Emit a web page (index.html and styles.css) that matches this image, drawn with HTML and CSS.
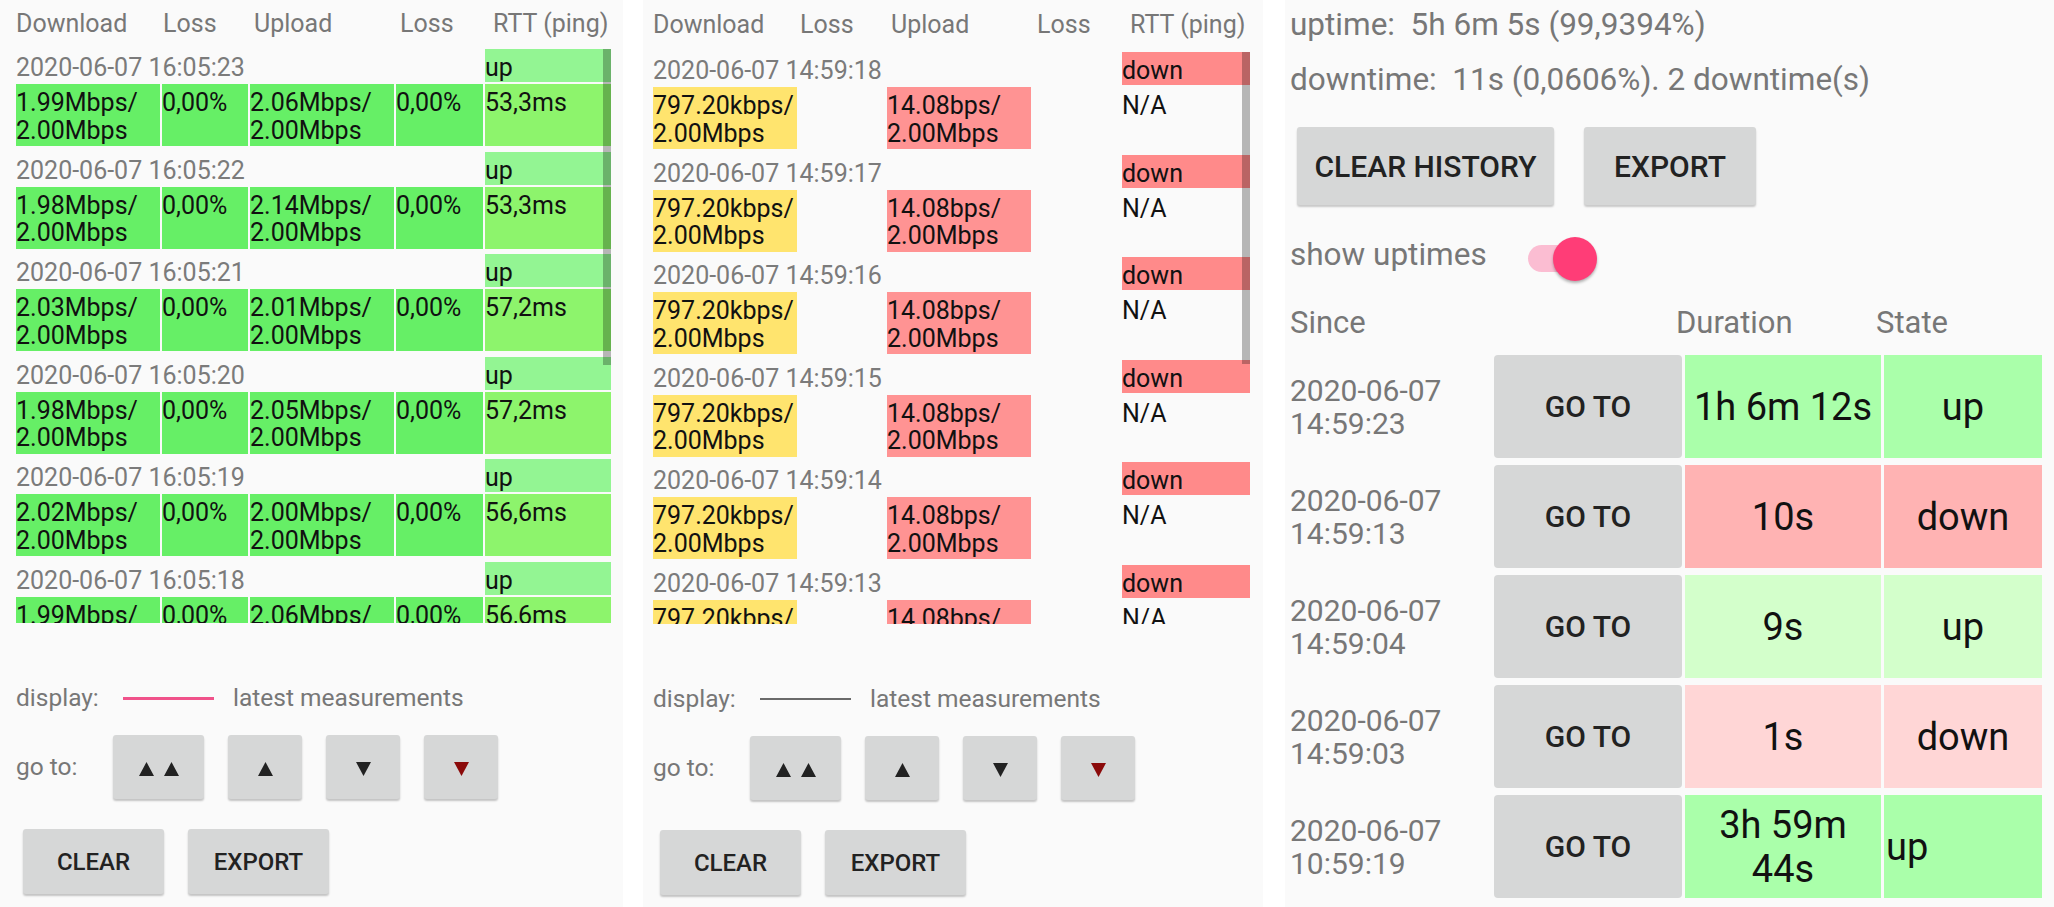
FILE: index.html
```html
<!DOCTYPE html>
<html lang="en">
<head>
<meta charset="utf-8">
<title>Network monitor</title>
<link rel="stylesheet" href="styles.css">
</head>
<body>
<div class="screen">

  <section class="panel p1">
    <div class="thead"><span>Download</span><span>Loss</span><span>Upload</span><span>Loss</span><span>RTT (ping)</span></div>
    <div class="list">
      <div class="rec">
        <div class="stamp">2020-06-07 16:05:23</div><div class="state up">up</div>
        <div class="cell ok">1.99Mbps/<br>2.00Mbps</div><div class="cell ok">0,00%</div><div class="cell ok">2.06Mbps/<br>2.00Mbps</div><div class="cell ok">0,00%</div><div class="cell rtt">53,3ms</div>
      </div>
      <div class="rec">
        <div class="stamp">2020-06-07 16:05:22</div><div class="state up">up</div>
        <div class="cell ok">1.98Mbps/<br>2.00Mbps</div><div class="cell ok">0,00%</div><div class="cell ok">2.14Mbps/<br>2.00Mbps</div><div class="cell ok">0,00%</div><div class="cell rtt">53,3ms</div>
      </div>
      <div class="rec">
        <div class="stamp">2020-06-07 16:05:21</div><div class="state up">up</div>
        <div class="cell ok">2.03Mbps/<br>2.00Mbps</div><div class="cell ok">0,00%</div><div class="cell ok">2.01Mbps/<br>2.00Mbps</div><div class="cell ok">0,00%</div><div class="cell rtt">57,2ms</div>
      </div>
      <div class="rec">
        <div class="stamp">2020-06-07 16:05:20</div><div class="state up">up</div>
        <div class="cell ok">1.98Mbps/<br>2.00Mbps</div><div class="cell ok">0,00%</div><div class="cell ok">2.05Mbps/<br>2.00Mbps</div><div class="cell ok">0,00%</div><div class="cell rtt">57,2ms</div>
      </div>
      <div class="rec">
        <div class="stamp">2020-06-07 16:05:19</div><div class="state up">up</div>
        <div class="cell ok">2.02Mbps/<br>2.00Mbps</div><div class="cell ok">0,00%</div><div class="cell ok">2.00Mbps/<br>2.00Mbps</div><div class="cell ok">0,00%</div><div class="cell rtt">56,6ms</div>
      </div>
      <div class="rec">
        <div class="stamp">2020-06-07 16:05:18</div><div class="state up">up</div>
        <div class="cell ok">1.99Mbps/<br>2.00Mbps</div><div class="cell ok">0,00%</div><div class="cell ok">2.06Mbps/<br>2.00Mbps</div><div class="cell ok">0,00%</div><div class="cell rtt">56,6ms</div>
      </div>
      <div class="thumb"></div>
    </div>
    <div class="disp"><span class="lbl">display:</span><span class="line pink"></span><span>latest measurements</span></div>
    <div class="goto"><span class="lbl2">go to:</span>
      <button class="nav wide"><svg width="40" height="14" viewBox="0 0 40 14"><path d="M0 14 L7.5 0 L15 14 Z M25 14 L32.5 0 L40 14 Z" fill="#222"/></svg></button>
      <button class="nav"><svg width="15" height="14" viewBox="0 0 15 14"><path d="M0 14 L7.5 0 L15 14 Z" fill="#222"/></svg></button>
      <button class="nav"><svg width="15" height="14" viewBox="0 0 15 14"><path d="M0 0 L15 0 L7.5 14 Z" fill="#222"/></svg></button>
      <button class="nav"><svg width="15" height="14" viewBox="0 0 15 14"><path d="M0 0 L15 0 L7.5 14 Z" fill="#8b0a0a"/></svg></button>
    </div>
    <div class="actions"><button class="btn">CLEAR</button><button class="btn">EXPORT</button></div>
  </section>

  <section class="panel p2">
    <div class="thead"><span>Download</span><span>Loss</span><span>Upload</span><span>Loss</span><span>RTT (ping)</span></div>
    <div class="list">
      <div class="rec">
        <div class="stamp">2020-06-07 14:59:18</div><div class="state down">down</div>
        <div class="cell warn">797.20kbps/<br>2.00Mbps</div><div class="cell"></div><div class="cell bad">14.08bps/<br>2.00Mbps</div><div class="cell"></div><div class="cell">N/A</div>
      </div>
      <div class="rec">
        <div class="stamp">2020-06-07 14:59:17</div><div class="state down">down</div>
        <div class="cell warn">797.20kbps/<br>2.00Mbps</div><div class="cell"></div><div class="cell bad">14.08bps/<br>2.00Mbps</div><div class="cell"></div><div class="cell">N/A</div>
      </div>
      <div class="rec">
        <div class="stamp">2020-06-07 14:59:16</div><div class="state down">down</div>
        <div class="cell warn">797.20kbps/<br>2.00Mbps</div><div class="cell"></div><div class="cell bad">14.08bps/<br>2.00Mbps</div><div class="cell"></div><div class="cell">N/A</div>
      </div>
      <div class="rec">
        <div class="stamp">2020-06-07 14:59:15</div><div class="state down">down</div>
        <div class="cell warn">797.20kbps/<br>2.00Mbps</div><div class="cell"></div><div class="cell bad">14.08bps/<br>2.00Mbps</div><div class="cell"></div><div class="cell">N/A</div>
      </div>
      <div class="rec">
        <div class="stamp">2020-06-07 14:59:14</div><div class="state down">down</div>
        <div class="cell warn">797.20kbps/<br>2.00Mbps</div><div class="cell"></div><div class="cell bad">14.08bps/<br>2.00Mbps</div><div class="cell"></div><div class="cell">N/A</div>
      </div>
      <div class="rec">
        <div class="stamp">2020-06-07 14:59:13</div><div class="state down">down</div>
        <div class="cell warn">797.20kbps/<br>2.00Mbps</div><div class="cell"></div><div class="cell bad">14.08bps/<br>2.00Mbps</div><div class="cell"></div><div class="cell">N/A</div>
      </div>
      <div class="thumb short"></div>
    </div>
    <div class="disp"><span class="lbl">display:</span><span class="line grey"></span><span>latest measurements</span></div>
    <div class="goto"><span class="lbl2">go to:</span>
      <button class="nav wide"><svg width="40" height="14" viewBox="0 0 40 14"><path d="M0 14 L7.5 0 L15 14 Z M25 14 L32.5 0 L40 14 Z" fill="#222"/></svg></button>
      <button class="nav"><svg width="15" height="14" viewBox="0 0 15 14"><path d="M0 14 L7.5 0 L15 14 Z" fill="#222"/></svg></button>
      <button class="nav"><svg width="15" height="14" viewBox="0 0 15 14"><path d="M0 0 L15 0 L7.5 14 Z" fill="#222"/></svg></button>
      <button class="nav"><svg width="15" height="14" viewBox="0 0 15 14"><path d="M0 0 L15 0 L7.5 14 Z" fill="#8b0a0a"/></svg></button>
    </div>
    <div class="actions"><button class="btn">CLEAR</button><button class="btn">EXPORT</button></div>
  </section>

  <section class="panel p3">
    <div class="stat">uptime:&nbsp; 5h 6m 5s (99,9394%)</div>
    <div class="stat">downtime:&nbsp; 11s (0,0606%). 2 downtime(s)</div>
    <div class="big-actions"><button class="bbtn clear">CLEAR HISTORY</button><button class="bbtn export">EXPORT</button></div>
    <div class="switch-row"><span class="sw-label">show uptimes</span><span class="switch"><span class="track"></span><span class="knob"></span></span></div>
    <div class="hhead"><span>Since</span><span>Duration</span><span>State</span></div>
    <div class="hist">
      <div class="since">2020-06-07<br>14:59:23</div><button class="gobtn">GO TO</button><div class="val up1">1h 6m 12s</div><div class="val up1">up</div>
    </div>
    <div class="hist">
      <div class="since">2020-06-07<br>14:59:13</div><button class="gobtn">GO TO</button><div class="val down1">10s</div><div class="val down1">down</div>
    </div>
    <div class="hist">
      <div class="since">2020-06-07<br>14:59:04</div><button class="gobtn">GO TO</button><div class="val up2">9s</div><div class="val up2">up</div>
    </div>
    <div class="hist">
      <div class="since">2020-06-07<br>14:59:03</div><button class="gobtn">GO TO</button><div class="val down2">1s</div><div class="val down2">down</div>
    </div>
    <div class="hist">
      <div class="since">2020-06-07<br>10:59:19</div><button class="gobtn">GO TO</button><div class="val up1">3h 59m 44s</div><div class="val up1 left">up</div>
    </div>
  </section>

</div>
</body>
</html>
```

FILE: styles.css
```css
* { box-sizing: border-box; }

body {
  margin: 0;
  background: #ffffff;
  font-family: Roboto, "Liberation Sans", Arial, sans-serif;
  color: #111;
}

.screen {
  display: flex;
  width: 2054px;
  height: 907px;
  overflow: hidden;
}

.panel {
  background: #fafafa;
  height: 907px;
  flex: none;
}

.p1 { width: 623px; padding: 10px 12px 0 16px; }
.p2 { width: 620px; margin-left: 20px; padding: 11px 13px 0 10px; }
.p3 { width: 769px; margin-left: 22px; padding: 7px 12px 0 5px; }

/* measurement tables */
.thead {
  display: grid;
  grid-template-columns: 147px 91px 146px 93px 1fr;
  font-size: 25px;
  line-height: 28px;
  color: #777;
  white-space: nowrap;
}

.list {
  position: relative;
  height: 574px;
  margin-top: 11px;
  overflow: hidden;
}
.p2 .list { height: 572px; margin-top: 13px; }

.rec {
  display: grid;
  grid-template-columns: 144px 86px 144px 87px 1fr;
  grid-template-rows: 33px 62px;
  gap: 2px;
  margin-bottom: 5.6px;
  font-size: 25px;
  line-height: 27.5px;
  white-space: nowrap;
}

.stamp {
  grid-column: 1 / 5;
  padding-top: 5px;
  color: #7b7b7b;
}

.state, .cell { padding-top: 5px; color: #111; }

.state.up { background: #93f593; }
.state.down { background: #ff8a8a; }
.cell.ok { background: #66ef66; }
.cell.rtt { background: #8df46c; }
.cell.warn { background: #ffe46e; }
.cell.bad { background: #ff9393; }

.thumb {
  position: absolute;
  top: 0;
  right: 0;
  width: 8px;
  height: 316px;
  background: rgba(0, 0, 0, 0.27);
}
.thumb.short { height: 312px; }

.disp {
  display: flex;
  align-items: center;
  margin-top: 61px;
  font-size: 24.5px;
  line-height: 28px;
  color: #777;
}
.disp .lbl { width: 107px; }
.disp .line { width: 91px; margin-right: 19px; }
.line.pink { height: 3px; background: #f0528a; }
.line.grey { height: 2px; background: #6a6a6a; }

.goto {
  display: flex;
  align-items: center;
  gap: 24px;
  margin-top: 23px;
  font-size: 24.5px;
  line-height: 28px;
  color: #777;
}
.goto .lbl2 { width: 73px; }

.nav, .btn, .bbtn, .gobtn {
  border: none;
  margin: 0;
  padding: 0;
  font-family: inherit;
  background: #d6d7d7;
  border-radius: 3px;
  color: #222;
  display: flex;
  align-items: center;
  justify-content: center;
}

.nav {
  width: 74px;
  height: 64px;
  box-shadow: 0 2px 2px rgba(0, 0, 0, 0.22);
}
.nav.wide { width: 91px; }
.nav svg { margin-top: 3px; }

.actions {
  display: flex;
  gap: 24px;
  margin-top: 30px;
  padding-left: 7px;
}
.btn {
  width: 141px;
  height: 65px;
  font-size: 24px;
  font-weight: 500;
  box-shadow: 0 2px 2px rgba(0, 0, 0, 0.22);
}

/* uptime panel */
.stat {
  font-size: 31.5px;
  line-height: 35px;
  color: #777;
  white-space: nowrap;
}
.stat + .stat { margin-top: 20px; }

.big-actions {
  display: flex;
  gap: 30px;
  margin-top: 30px;
  padding-left: 7px;
}
.bbtn {
  height: 78px;
  font-size: 30px;
  font-weight: 500;
  box-shadow: 0 2px 2px rgba(0, 0, 0, 0.2);
}
.bbtn.clear { width: 257px; }
.bbtn.export { width: 172px; }

.switch-row {
  display: flex;
  align-items: flex-start;
  margin-top: 32px;
}
.sw-label {
  width: 238px;
  font-size: 31.5px;
  line-height: 35px;
  color: #777;
}
.switch {
  position: relative;
  width: 70px;
  height: 44px;
}
.track {
  position: absolute;
  left: 0;
  top: 8px;
  width: 60px;
  height: 27px;
  border-radius: 14px;
  background: #fbbdd2;
}
.knob {
  position: absolute;
  left: 25px;
  top: 0;
  width: 44px;
  height: 44px;
  border-radius: 50%;
  background: #ff3d77;
  box-shadow: 0 2px 3px rgba(0, 0, 0, 0.3);
}

.hhead {
  display: grid;
  grid-template-columns: 386px 200px 1fr;
  margin-top: 24px;
  font-size: 31px;
  line-height: 35px;
  color: #777;
}

.hist {
  display: grid;
  grid-template-columns: 201px 188px 196px 158px;
  column-gap: 3px;
  height: 103px;
  margin-top: 7px;
}
.hhead + .hist { margin-top: 15px; }

.since {
  align-self: center;
  font-size: 30px;
  line-height: 33px;
  color: #777;
}

.gobtn {
  font-size: 30px;
  font-weight: 500;
  border-radius: 4px;
}

.val {
  display: flex;
  align-items: center;
  justify-content: center;
  text-align: center;
  font-size: 38px;
  line-height: 44px;
  color: #111;
}
.val.left { justify-content: flex-start; padding-left: 2px; }
.up1 { background: #aaffaa; }
.up2 { background: #d3ffcb; }
.down1 { background: #ffb3b3; }
.down2 { background: #ffd6d6; }
```
